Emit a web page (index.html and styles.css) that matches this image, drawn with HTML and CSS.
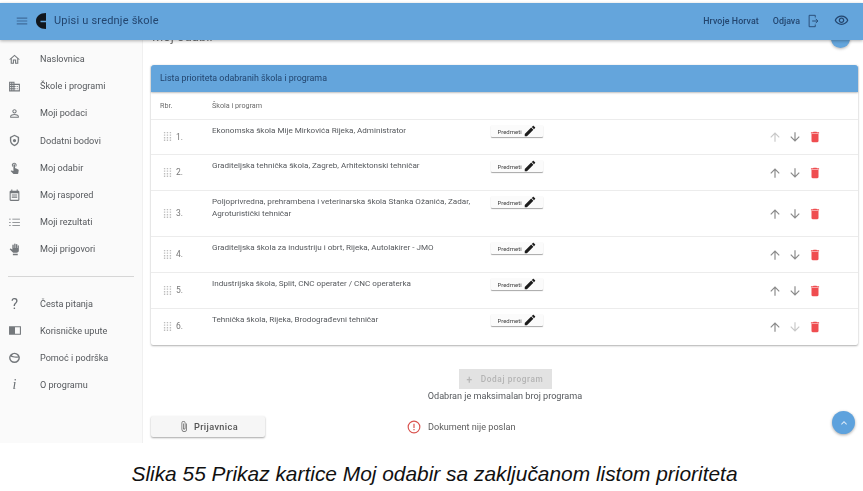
FILE: index.html
```html
<!DOCTYPE html>
<html lang="hr">
<head>
<meta charset="utf-8">
<title>Upisi u srednje škole</title>
<link rel="stylesheet" href="styles.css">
</head>
<body>
<svg class="defs" aria-hidden="true">
  <symbol id="i-up" viewBox="0 0 24 24"><path d="M4 12l1.410 1.410L11 7.830V20h2V7.830l5.580 5.590L20 12l-8-8-8 8z"/></symbol>
  <symbol id="i-down" viewBox="0 0 24 24"><path d="M20 12l-1.410-1.410L13 16.170V4h-2v12.170l-5.580-5.590L4 12l8 8 8-8z"/></symbol>
  <symbol id="i-del" viewBox="0 0 24 24"><path d="M6 19c0 1.100.9 2 2 2h8c1.100 0 2-.9 2-2V7H6v12zM19 4h-3.500l-1-1h-5l-1 1H5v2h14V4z"/></symbol>
  <symbol id="i-pen" viewBox="0 0 24 24"><path d="M3 17.250V21h3.750L17.810 9.940l-3.750-3.750L3 17.250zM20.710 7.040c.39-.39.39-1.020 0-1.410l-2.340-2.340c-.39-.39-1.020-.39-1.410 0l-1.830 1.830 3.750 3.750 1.830-1.830z"/></symbol>
  <symbol id="i-drag" viewBox="0 0 10 12"><path d="M1 1h1.500v1.500H1zM4.200 1h1.500v1.500H4.200zM7.500 1H9v1.500H7.500zM1 3.800h1.500v1.500H1zM4.200 3.800h1.500v1.500H4.200zM7.500 3.800H9v1.500H7.500zM1 6.600h1.500v1.500H1zM4.200 6.600h1.500v1.500H4.200zM7.500 6.600H9v1.500H7.500zM1 9.400h1.500v1.500H1zM4.200 9.400h1.500v1.500H4.200zM7.500 9.400H9v1.500H7.500z"/></symbol>
</svg>

<div class="shot">
  <header class="topbar">
    <svg class="menu" viewBox="0 0 24 24"><path d="M3 18h18v-2H3v2zm0-5h18v-2H3v2zm0-7v2h18V6H3z"/></svg>
    <svg class="logo" viewBox="0 0 10 16"><path d="M10 0C4 0 0 3.500 0 8s4 8 10 8V9.300H4.500V7.700H10z"/></svg>
    <span class="app-title">Upisi u srednje škole</span>
    <span class="user">Hrvoje Horvat</span>
    <span class="logout">Odjava</span>
    <svg class="logout-icon" viewBox="0 0 12 16"><path d="M8 4V1.500H1v13h7V12M4.500 8H11M8.500 5.500 11 8l-2.500 2.500"/></svg>
    <svg class="eye" viewBox="0 0 24 24"><path d="M12 6c3.790 0 7.170 2.130 8.820 5.500C19.170 14.870 15.790 17 12 17s-7.170-2.130-8.820-5.500C4.830 8.130 8.210 6 12 6m0-2C7 4 2.730 7.110 1 11.500 2.730 15.890 7 19 12 19s9.270-3.110 11-7.500C21.270 7.110 17 4 12 4zm0 5c1.380 0 2.500 1.120 2.500 2.500S13.380 14 12 14s-2.500-1.120-2.500-2.500S10.620 9 12 9m0-2c-2.480 0-4.500 2.020-4.500 4.500S9.520 16 12 16s4.500-2.020 4.500-4.500S14.480 7 12 7z"/></svg>
  </header>

  <div class="workspace">
    <nav class="sidebar">
      <ul class="nav-list">
        <li class="nav-item"><svg class="nav-icon" viewBox="0 0 24 24"><path d="M12 5.690l5 4.500V18h-2v-6H9v6H7v-7.810l5-4.500M12 3L2 12h3v8h6v-6h2v6h6v-8h3L12 3z"/></svg>Naslovnica</li>
        <li class="nav-item"><svg class="nav-icon" viewBox="0 0 24 24"><path d="M12 7V3H2v18h20V7H12zM6 19H4v-2h2v2zm0-4H4v-2h2v2zm0-4H4V9h2v2zm0-4H4V5h2v2zm4 12H8v-2h2v2zm0-4H8v-2h2v2zm0-4H8V9h2v2zm0-4H8V5h2v2zm10 12h-8v-2h2v-2h-2v-2h2v-2h-2V9h8v10zm-2-8h-2v2h2v-2zm0 4h-2v2h2v-2z"/></svg>Škole i programi</li>
        <li class="nav-item"><svg class="nav-icon" viewBox="0 0 24 24"><path d="M12 5.900c1.160 0 2.100.94 2.100 2.100s-.94 2.100-2.100 2.100S9.900 9.160 9.900 8s.94-2.100 2.100-2.100m0 9c2.970 0 6.100 1.460 6.100 2.100v1.100H5.900V17c0-.64 3.130-2.100 6.100-2.100M12 4C9.790 4 8 5.790 8 8s1.790 4 4 4 4-1.790 4-4-1.790-4-4-4zm0 9c-2.670 0-8 1.340-8 4v3h16v-3c0-2.660-5.330-4-8-4z"/></svg>Moji podaci</li>
        <li class="nav-item"><svg class="nav-icon" viewBox="0 0 24 24"><path fill-rule="evenodd" d="M12 1.500 3.500 5.500v6.500c0 4.800 3.400 8.800 8.500 10.500 5.100-1.700 8.500-5.700 8.500-10.500V5.500zm0 2.400 6 2.900V12c0 3.600-2.400 6.600-6 8-3.600-1.400-6-4.400-6-8V6.800zM12 9a3 3 0 1 0 0 6 3 3 0 0 0 0-6z"/></svg>Dodatni bodovi</li>
        <li class="nav-item"><svg class="nav-icon" viewBox="0 0 24 24"><path d="M9 11.240V7.500C9 6.120 10.120 5 11.500 5S14 6.120 14 7.500v3.740c1.210-.81 2-2.180 2-3.740C16 5.010 13.990 3 11.500 3S7 5.010 7 7.500c0 1.560.79 2.930 2 3.740zm9.840 4.630l-4.540-2.260c-.17-.07-.35-.11-.54-.11H13v-6c0-.83-.67-1.500-1.500-1.500S10 6.670 10 7.500v10.740l-3.430-.72c-.08-.01-.15-.03-.24-.03-.31 0-.59.13-.79.33l-.79.8 4.940 4.940c.27.27.65.44 1.060.44h6.790c.75 0 1.330-.55 1.440-1.280l.75-5.270c.01-.07.02-.14.02-.2 0-.62-.38-1.160-.91-1.380z"/></svg>Moj odabir</li>
        <li class="nav-item"><svg class="nav-icon" viewBox="0 0 24 24"><path fill-rule="evenodd" d="M19 3h-1V1h-2v2H8V1H6v2H5c-1.100 0-2 .9-2 2v15c0 1.100.9 2 2 2h14c1.100 0 2-.9 2-2V5c0-1.100-.9-2-2-2zm0 17H5V8h14zM7 10h10v2H7zM7 14h10v2H7z"/></svg>Moj raspored</li>
        <li class="nav-item"><svg class="nav-icon" viewBox="0 0 24 24"><path d="M2 5h3v1.500H2zM8 5h14v1.500H8zM2 11h3v1.500H2zM8 11h14v1.500H8zM2 17h3v1.500H2zM8 17h14v1.500H8z"/></svg>Moji rezultati</li>
        <li class="nav-item"><svg class="nav-icon" viewBox="0 0 24 24"><path d="M20 5.500V14c0 2.500-1.800 4-4 4h-5c-1 0-1.800-.4-2.500-1L3 11.500s1-1 1.100-1c.5-.4 1-.4 1.500-.1L8 12V4c0-.8.6-1.400 1.300-1.400S10.600 3.200 10.600 4v5h.8V2.400C11.400 1.600 12 1 12.700 1S14 1.600 14 2.400V9h.8V3.200c0-.8.6-1.400 1.300-1.400s1.300.6 1.300 1.400V9h.8V5.500c0-.8.6-1.300 1-1.300s.8.5.8 1.300zM9 20h9v2.500H9z"/></svg>Moji prigovori</li>
      </ul>
      <hr class="nav-rule">
      <ul class="nav-list">
        <li class="nav-item"><span class="nav-glyph">?</span>Česta pitanja</li>
        <li class="nav-item"><svg class="nav-icon nav-icon-wide" viewBox="0 0 24 24"><path fill-rule="evenodd" d="M1 4h22v16H1zm11 2v12h9V6z"/></svg>Korisničke upute</li>
        <li class="nav-item"><svg class="nav-icon" viewBox="0 0 24 24"><path fill-rule="evenodd" d="M12 3a10 9.500 0 1 0 0 19 10 9.500 0 0 0 0-19zm0 2.500c3 0 5.600 1.800 6.600 4.500-3.500.8-9 .2-11.500-1.600C8.300 6.500 10 5.500 12 5.500zm-7.500 7c0-.8.1-1.500.4-2.200C8 12.300 14.500 13 19.500 12c0 3.800-3.500 7.500-7.500 7.500s-7.500-3.300-7.500-7z"/></svg>Pomoć i podrška</li>
        <li class="nav-item"><span class="nav-glyph nav-glyph-i">i</span>O programu</li>
      </ul>
    </nav>

    <main class="content">
      <div class="title-row">
        <h1 class="page-title">Moj odabir</h1>
        <span class="help-dot"></span>
      </div>

      <section class="card">
        <h2 class="card-head">Lista prioriteta odabranih škola i programa</h2>
        <div class="table-head"><span>Rbr.</span><span>Škola i program</span></div>

        <div class="row">
          <span class="rank"><svg class="drag"><use href="#i-drag"/></svg>1.</span>
          <span class="school">Ekonomska škola Mije Mirkovića Rijeka, Administrator</span>
          <span class="subjects">Predmeti<svg class="pen"><use href="#i-pen"/></svg></span>
          <span class="actions"><svg class="act off"><use href="#i-up"/></svg><svg class="act"><use href="#i-down"/></svg><svg class="act del"><use href="#i-del"/></svg></span>
        </div>
        <div class="row">
          <span class="rank"><svg class="drag"><use href="#i-drag"/></svg>2.</span>
          <span class="school">Graditeljska tehnička škola, Zagreb, Arhitektonski tehničar</span>
          <span class="subjects">Predmeti<svg class="pen"><use href="#i-pen"/></svg></span>
          <span class="actions"><svg class="act"><use href="#i-up"/></svg><svg class="act"><use href="#i-down"/></svg><svg class="act del"><use href="#i-del"/></svg></span>
        </div>
        <div class="row">
          <span class="rank"><svg class="drag"><use href="#i-drag"/></svg>3.</span>
          <span class="school">Poljoprivredna, prehrambena i veterinarska škola Stanka Ožanića, Zadar, Agroturistički tehničar</span>
          <span class="subjects">Predmeti<svg class="pen"><use href="#i-pen"/></svg></span>
          <span class="actions"><svg class="act"><use href="#i-up"/></svg><svg class="act"><use href="#i-down"/></svg><svg class="act del"><use href="#i-del"/></svg></span>
        </div>
        <div class="row">
          <span class="rank"><svg class="drag"><use href="#i-drag"/></svg>4.</span>
          <span class="school">Graditeljska škola za industriju i obrt, Rijeka, Autolakirer - JMO</span>
          <span class="subjects">Predmeti<svg class="pen"><use href="#i-pen"/></svg></span>
          <span class="actions"><svg class="act"><use href="#i-up"/></svg><svg class="act"><use href="#i-down"/></svg><svg class="act del"><use href="#i-del"/></svg></span>
        </div>
        <div class="row">
          <span class="rank"><svg class="drag"><use href="#i-drag"/></svg>5.</span>
          <span class="school">Industrijska škola, Split, CNC operater / CNC operaterka</span>
          <span class="subjects">Predmeti<svg class="pen"><use href="#i-pen"/></svg></span>
          <span class="actions"><svg class="act"><use href="#i-up"/></svg><svg class="act"><use href="#i-down"/></svg><svg class="act del"><use href="#i-del"/></svg></span>
        </div>
        <div class="row">
          <span class="rank"><svg class="drag"><use href="#i-drag"/></svg>6.</span>
          <span class="school">Tehnička škola, Rijeka, Brodograđevni tehničar</span>
          <span class="subjects">Predmeti<svg class="pen"><use href="#i-pen"/></svg></span>
          <span class="actions"><svg class="act"><use href="#i-up"/></svg><svg class="act off"><use href="#i-down"/></svg><svg class="act del"><use href="#i-del"/></svg></span>
        </div>
      </section>

      <div class="add-block">
        <span class="add-btn"><span class="plus">+</span>Dodaj program</span>
        <p class="add-note">Odabran je maksimalan broj programa</p>
      </div>

      <div class="bottom-row">
        <span class="doc-btn"><svg class="clip" viewBox="0 0 24 24"><path d="M16.500 6v11.500c0 2.210-1.790 4-4 4s-4-1.790-4-4V5c0-1.380 1.120-2.500 2.500-2.500s2.500 1.120 2.500 2.500v10.500c0 .55-.45 1-1 1s-1-.45-1-1V6H10v9.500c0 1.380 1.120 2.500 2.500 2.500s2.500-1.120 2.500-2.500V5c0-2.210-1.790-4-4-4S7 2.790 7 5v12.500c0 3.040 2.460 5.500 5.500 5.500s5.500-2.460 5.500-5.500V6h-1.500z"/></svg>Prijavnica</span>
        <span class="doc-status"><svg class="alert" viewBox="0 0 24 24"><circle cx="12" cy="12" r="10"/><path d="M12 6.500v7M12 15.500v2"/></svg>Dokument nije poslan</span>
      </div>

      <span class="fab"><svg viewBox="0 0 24 24"><path d="M7.410 15.410L12 10.830l4.590 4.580L18 14l-6-6-6 6z"/></svg></span>
    </main>
  </div>

  <p class="caption">Slika 55 Prikaz kartice Moj odabir sa zaključanom listom prioriteta</p>
</div>
</body>
</html>
```

FILE: styles.css
```css
* { box-sizing: border-box; }
html, body { margin: 0; background: #fff; }
body { font-family: Roboto, "Liberation Sans", sans-serif; overflow: hidden; }
.defs { display: none; }
ul { list-style: none; margin: 0; padding: 0; }
p, h1, h2 { margin: 0; }

.shot { width: 863px; height: 491px; padding-top: 3px; }

.topbar {
  position: relative; z-index: 2;
  height: 37px; background: #64a5dc;
  display: flex; align-items: center;
  padding: 0 14px 2px 15px;
  color: #23456e;
  box-shadow: 0 1px 3px rgba(0,0,0,.3);
  filter: blur(.4px);
}
.menu { width: 14px; height: 14px; fill: #3f6c9b; }
.logo { width: 10px; height: 16px; margin-left: 7px; fill: #10161d; }
.app-title { margin-left: 8px; font-size: 11px; letter-spacing: .2px; flex: 1; }
.user { font-size: 8.800px; letter-spacing: .1px; font-weight: 500; }
.logout { font-size: 8.900px; margin-left: 14px; font-weight: 500; }
.logout-icon { width: 11px; height: 14px; margin-left: 8px; fill: none; stroke: #23456e; stroke-width: 1; }
.eye { width: 15px; height: 15px; margin-left: 15px; fill: #23456e; }

.workspace { display: flex; height: 403px; }

.sidebar {
  width: 143px; flex: none; background: #fafafa; padding-top: 5.500px;
  border-right: 1px solid #f0f0f0; color: #55585c;
  filter: blur(.4px);
}
.nav-item { height: 27.200px; display: flex; align-items: center; font-size: 9.100px; }
.nav-icon { width: 13px; height: 13px; margin: 0 19px 0 8px; flex: none; fill: #74787c; }
.nav-icon-wide { width: 14px; margin: 0 18px 0 8px; }
.nav-glyph { width: 13px; margin: 0 19px 0 8px; text-align: center; font-size: 15px; color: #6b7075; }
.nav-glyph-i { font-family: "Liberation Serif", serif; font-style: italic; font-size: 14px; }
.nav-rule { margin: 13px 8px 13px; border: 0; border-top: 1px solid #d6d6d6; }

.content {
  position: relative; flex: 1; min-width: 0; overflow: hidden;
  padding: 0 5px 0 8px; color: #55585c;
  filter: blur(.4px);
}
.title-row { display: flex; justify-content: space-between; height: 20px; margin: -13px 0 18px; }
.page-title { font-size: 13px; font-weight: 400; line-height: 20px; color: #777; margin-left: 1px; }
.help-dot { width: 19px; height: 19px; border-radius: 50%; background: #64a5dc; margin: 2px 8px 0 0; box-shadow: 0 1px 3px rgba(0,0,0,.3); }

.card { height: 280px; background: #fff; box-shadow: 0 1px 2px rgba(0,0,0,.3), 0 0 2px rgba(0,0,0,.08); border-radius: 0 0 2px 2px; }
.card-head {
  height: 27px; padding-left: 9px; background: #64a5dc; border-radius: 3px 3px 0 0;
  font-size: 8.900px; font-weight: 400; line-height: 26px; color: #23456e;
  box-shadow: 0 1px 2px rgba(0,0,0,.25);
}
.table-head { height: 27px; display: grid; grid-template-columns: 52px 1fr; align-items: center; padding: 0 0 1px 9px; font-size: 7.200px; color: #6a6a6a; }

.row {
  display: grid; grid-template-columns: 49px 279px 52px 1fr;
  min-height: 36px; padding: 4px 0 17px 12px;
  border-top: 1px solid #ececec;
}
.table-head + .row { min-height: 35px; }
.rank { display: flex; align-items: center; align-self: center; height: 0; font-size: 8.500px; color: #777; position: relative; top: 6px; }
.drag { width: 9px; height: 11px; margin-right: 4px; fill: #bdbdbd; }
.school { font-size: 8.100px; line-height: 12px; color: #55585c; padding-right: 8px; }
.subjects {
  align-self: start; height: 12px; margin-top: 1px; background: #fbfbfb;
  display: flex; align-items: center; justify-content: center; gap: 1px;
  font-size: 6px; color: #444; border-radius: 1px; box-shadow: 0 1px 1px rgba(0,0,0,.35);
}
.pen { width: 14px; height: 14px; fill: #1c1c1c; }
.actions { display: flex; gap: 6px; height: 0; align-self: center; align-items: center; margin-left: 225px; position: relative; top: 6.500px; }
.act { width: 14px; height: 14px; fill: #8a8a8a; flex: none; }
.act.off { fill: #c8c8c8; }
.act.del { fill: #ef4d50; }

.add-block { margin-top: 24px; display: flex; flex-direction: column; align-items: center; padding-left: 1px; }
.add-btn {
  width: 93px; height: 20px; background: #e2e2e2;
  display: flex; align-items: center; justify-content: center;
  font-size: 8.300px; font-weight: 500; letter-spacing: .6px; color: #b4b4b4;
}
.plus { margin-right: 8px; font-size: 10px; }
.add-note { margin-top: 1px; font-size: 9.100px; line-height: 12px; color: #55585c; }

.bottom-row { display: flex; align-items: center; margin-top: 14px; height: 21px; }
.doc-btn {
  width: 114px; height: 21px; background: #f6f6f6; border-radius: 2px;
  display: flex; align-items: center; justify-content: center; gap: 4px;
  font-size: 9.200px; font-weight: 500; letter-spacing: .35px; color: #555;
  box-shadow: 0 1px 2px rgba(0,0,0,.35);
}
.clip { width: 12px; height: 15px; fill: #666; }
.doc-status { display: flex; align-items: center; margin-left: 142px; font-size: 9.100px; color: #5c5c5c; }
.alert { width: 14px; height: 14px; margin-right: 7px; fill: none; stroke: #d9534f; stroke-width: 2; }

.fab {
  position: absolute; left: 689px; top: 371px;
  width: 23px; height: 23px; border-radius: 50%; background: #5ea2dd;
  display: flex; align-items: center; justify-content: center;
  box-shadow: 0 1px 3px rgba(0,0,0,.35);
}
.fab svg { width: 12px; height: 12px; fill: #dcebf8; }

.caption {
  margin-top: 19px; padding-left: 6px; text-align: center; color: #111;
  font-family: "Liberation Sans", Arial, sans-serif; font-style: italic; font-size: 20.900px; line-height: 24px;
}
```
